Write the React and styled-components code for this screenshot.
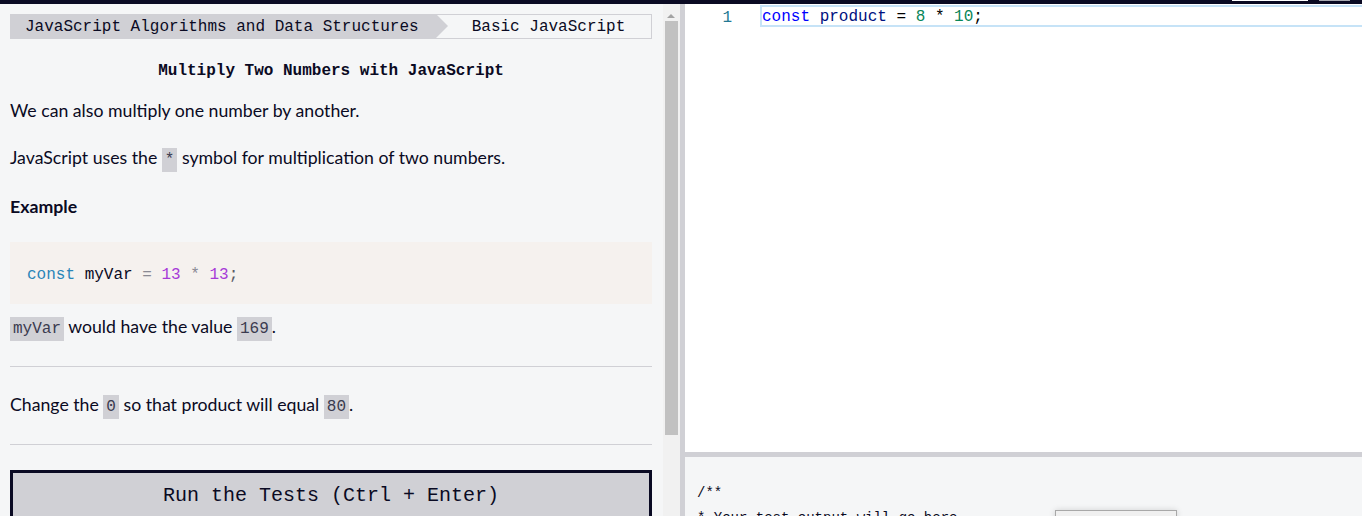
import styled, { createGlobalStyle } from "styled-components";

const GlobalStyle = createGlobalStyle`
    html, body {
        margin: 0;
        padding: 0;
        overflow: hidden;
    }
    * {
        box-sizing: border-box;
    }
`;

const App = () => {
    return (
        <>
            <GlobalStyle />
            <Page>
                <TopBar>
                    <NavStub $color="#ffffff" $width={76} />
                    <NavStub $color="#a9a9b0" $width={31} />
                </TopBar>
                <Main>
                    <LeftPane>
                        <Instructions>
                            <Breadcrumb>
                                <CrumbFirst>JavaScript Algorithms and Data Structures</CrumbFirst>
                                <CrumbSecond>Basic JavaScript</CrumbSecond>
                            </Breadcrumb>
                            <Title>Multiply Two Numbers with JavaScript</Title>
                            <Paragraph $top={16}>We can also multiply one number by another.</Paragraph>
                            <Paragraph $top={20}>
                                JavaScript uses the <InlineCode>*</InlineCode> symbol for multiplication of two numbers.
                            </Paragraph>
                            <Paragraph $top={21} $bold>Example</Paragraph>
                            <CodeBlock>
                                <Token $color="#2a85b8">const</Token> <Token $color="#0a0a23">myVar</Token>{" "}
                                <Token $color="#8a8a94">=</Token> <Token $color="#a73ad8">13</Token>{" "}
                                <Token $color="#8a8a94">*</Token> <Token $color="#a73ad8">13</Token>
                                <Token $color="#5a5a66">;</Token>
                            </CodeBlock>
                            <Paragraph $top={9}>
                                <InlineCode>myVar</InlineCode> would have the value <InlineCode>169</InlineCode>.
                            </Paragraph>
                            <Rule />
                            <Paragraph $top={24}>
                                Change the <InlineCode>0</InlineCode> so that product will equal <InlineCode>80</InlineCode>.
                            </Paragraph>
                            <Rule />
                            <RunButton>Run the Tests (Ctrl + Enter)</RunButton>
                        </Instructions>
                        <ScrollTrack>
                            <ScrollArrow />
                            <ScrollThumb />
                        </ScrollTrack>
                    </LeftPane>
                    <VerticalSplit />
                    <RightPane>
                        <Editor>
                            <EditorLine>
                                <LineNumber>1</LineNumber>
                                <LineCode>
                                    <Token $color="#0000ff">const</Token> <Token $color="#001080">product</Token>{" "}
                                    <Token $color="#000000">=</Token> <Token $color="#098658">8</Token>{" "}
                                    <Token $color="#000000">*</Token> <Token $color="#098658">10</Token>
                                    <Token $color="#000000">;</Token>
                                </LineCode>
                            </EditorLine>
                        </Editor>
                        <HorizontalSplit />
                        <Output>
                            <OutputText>
                                /**{"\n"}* Your test output will go here
                            </OutputText>
                            <HoverBox />
                        </Output>
                    </RightPane>
                </Main>
            </Page>
        </>
    );
};

export default App;

const Page = styled.div`
    width: 1362px;
    height: 516px;
    display: flex;
    flex-direction: column;
    background: #f5f6f7;
    overflow: hidden;
`;

const TopBar = styled.div`
    height: 4px;
    background: #0a0a23;
    display: flex;
    justify-content: flex-end;
    align-items: flex-start;
    gap: 11px;
    padding-right: 12px;
    flex-shrink: 0;
`;

const NavStub = styled.div`
    width: ${(p) => p.$width}px;
    height: 1px;
    background: ${(p) => p.$color};
`;

const Main = styled.div`
    flex: 1;
    display: flex;
    min-height: 0;
`;

const LeftPane = styled.div`
    width: 680px;
    display: flex;
    flex-shrink: 0;
    background: #f5f6f7;
`;

const Instructions = styled.div`
    width: 663px;
    padding: 10px 11px 0 10px;
    color: #0a0a23;
    font-family: Lato, "Noto Sans", sans-serif;
    overflow: hidden;
`;

const Breadcrumb = styled.div`
    display: flex;
    height: 25px;
    font-family: "Liberation Mono", "DejaVu Sans Mono", monospace;
    font-size: 16px;
    line-height: 26px;
    color: #0a0a23;
`;

const CrumbFirst = styled.div`
    position: relative;
    background: #d0d0d5;
    display: flex;
    align-items: center;
    padding: 0 17px 0 15px;
    width: 426px;
    white-space: nowrap;

    &::after {
        content: "";
        position: absolute;
        right: -12px;
        top: 0;
        border-top: 12.5px solid transparent;
        border-bottom: 12.5px solid transparent;
        border-left: 12px solid #d0d0d5;
    }
`;

const CrumbSecond = styled.div`
    flex: 1;
    display: flex;
    align-items: center;
    justify-content: center;
    padding-left: 10px;
    border: 1px solid #d0d0d5;
    border-left: none;
    background: #f5f6f7;
    white-space: nowrap;
`;

const Title = styled.h1`
    margin: 22px 0 0;
    font-family: "Liberation Mono", "DejaVu Sans Mono", monospace;
    font-size: 16px;
    line-height: 20px;
    font-weight: 700;
    text-align: center;
`;

const Paragraph = styled.p`
    margin: ${(p) => p.$top}px 0 0;
    font-size: 17.7px;
    line-height: 27px;
    font-weight: ${(p) => (p.$bold ? 700 : 400)};
`;

const InlineCode = styled.code`
    display: inline-block;
    background: #d0d0d5;
    color: #3b3b4f;
    font-family: "Liberation Mono", "DejaVu Sans Mono", monospace;
    font-size: 16px;
    line-height: 24px;
    padding: 0 3px;
    vertical-align: baseline;
`;

const CodeBlock = styled.pre`
    margin: 22px 0 0;
    height: 62px;
    background: #f5f1ee;
    padding: 20px 17px 16px;
    font-family: "Liberation Mono", "DejaVu Sans Mono", monospace;
    font-size: 16px;
    line-height: 26px;
`;

const Token = styled.span`
    color: ${(p) => p.$color};
`;

const Rule = styled.hr`
    margin: 25px 0 0;
    border: none;
    border-top: 1px solid #d0d0d5;
`;

const RunButton = styled.button`
    display: block;
    width: 100%;
    height: 50px;
    margin-top: 25px;
    background: #d0d0d5;
    border: 3px solid #0a0a23;
    color: #0a0a23;
    font-family: "Liberation Mono", "DejaVu Sans Mono", monospace;
    font-size: 20px;
    padding: 0;
    cursor: pointer;
`;

const ScrollTrack = styled.div`
    position: relative;
    width: 17px;
    background: #f1f1f1;
    flex-shrink: 0;
`;

const ScrollArrow = styled.div`
    position: absolute;
    top: 10px;
    left: 4px;
    border-left: 4px solid transparent;
    border-right: 4px solid transparent;
    border-bottom: 4px solid #a3a3a3;
`;

const ScrollThumb = styled.div`
    position: absolute;
    top: 17px;
    left: 2px;
    width: 13px;
    height: 414px;
    background: #c1c1c1;
`;

const VerticalSplit = styled.div`
    width: 5px;
    background: #d0d0d5;
    flex-shrink: 0;
`;

const RightPane = styled.div`
    flex: 1;
    display: flex;
    flex-direction: column;
    min-width: 0;
`;

const Editor = styled.div`
    height: 448px;
    background: #ffffff;
    padding-top: 1px;
    flex-shrink: 0;
`;

const EditorLine = styled.div`
    display: flex;
    height: 22px;
    font-family: "Liberation Mono", "DejaVu Sans Mono", monospace;
    font-size: 16px;
    line-height: 18px;
`;

const LineNumber = styled.div`
    width: 75px;
    padding: 4px 28px 0 0;
    text-align: right;
    color: #237893;
`;

const LineCode = styled.div`
    flex: 1;
    height: 100%;
    padding-top: 1px;
    white-space: pre;
    border: 2px solid #c6e3f7;
    border-right: none;
`;

const HorizontalSplit = styled.div`
    height: 5px;
    background: #d0d0d5;
    flex-shrink: 0;
`;

const Output = styled.div`
    position: relative;
    flex: 1;
    background: #f5f6f7;
    padding: 24px 12px 0;
`;

const OutputText = styled.pre`
    margin: 0;
    font-family: "Liberation Mono", "DejaVu Sans Mono", monospace;
    font-size: 14px;
    line-height: 25px;
    color: #0a0a23;
`;

const HoverBox = styled.div`
    position: absolute;
    left: 370px;
    top: 53px;
    width: 122px;
    height: 30px;
    background: #f0f0f0;
    border: 1px solid #a8a8a8;
    box-shadow: 0 0 6px rgba(0, 0, 0, 0.15);
`;
